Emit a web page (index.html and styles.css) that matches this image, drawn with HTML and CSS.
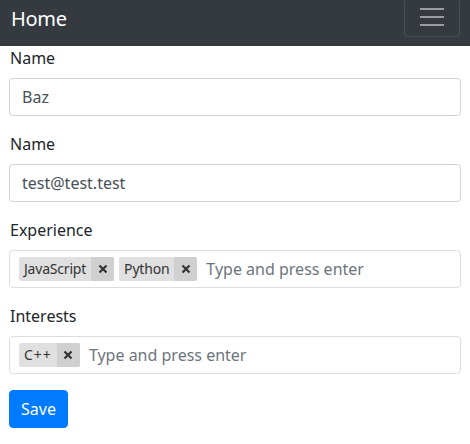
FILE: index.html
```html
<!DOCTYPE html>
<html>
<head>
<meta charset="utf-8">
<link rel="stylesheet" href="styles.css">
</head>
<body>
<nav class="navbar">
  <span class="brand">Home</span>
  <button class="toggler"><span class="bar"></span><span class="bar"></span><span class="bar"></span></button>
</nav>
<form class="form">
  <div class="group">
    <label class="label">Name</label>
    <div class="control">Baz</div>
  </div>
  <div class="group">
    <label class="label">Name</label>
    <div class="control">test@test.test</div>
  </div>
  <div class="group">
    <label class="label">Experience</label>
    <div class="control tags">
      <span class="tag"><span class="tag-text">JavaScript</span><span class="tag-x"><svg width="10" height="10" viewBox="0 0 10 10"><path d="M1.5 1.5 8.5 8.5M8.5 1.5 1.5 8.5" stroke="#333" stroke-width="2.2" stroke-linecap="butt"/></svg></span></span>
      <span class="tag"><span class="tag-text">Python</span><span class="tag-x"><svg width="10" height="10" viewBox="0 0 10 10"><path d="M1.5 1.5 8.5 8.5M8.5 1.5 1.5 8.5" stroke="#333" stroke-width="2.2" stroke-linecap="butt"/></svg></span></span>
      <span class="placeholder">Type and press enter</span>
    </div>
  </div>
  <div class="group">
    <label class="label">Interests</label>
    <div class="control tags">
      <span class="tag"><span class="tag-text wide">C++</span><span class="tag-x"><svg width="10" height="10" viewBox="0 0 10 10"><path d="M1.5 1.5 8.5 8.5M8.5 1.5 1.5 8.5" stroke="#333" stroke-width="2.2" stroke-linecap="butt"/></svg></span></span>
      <span class="placeholder">Type and press enter</span>
    </div>
  </div>
  <button type="button" class="btn">Save</button>
</form>
</body>
</html>
```
FILE: styles.css
```css
* { box-sizing: border-box; }
html, body { margin: 0; padding: 0; }
body {
  font-family: "Noto Sans", "Open Sans", sans-serif;
  font-size: 16px;
  line-height: 24px;
  color: #212529;
  background: #fff;
  width: 470px;
  height: 444px;
  overflow: hidden;
}
.navbar {
  height: 46px;
  background: #343a40;
  display: flex;
  justify-content: space-between;
  align-items: flex-start;
  padding: 0 10px 0 11px;
  overflow: hidden;
}
.brand {
  color: #fff;
  font-size: 20px;
  line-height: 30px;
  margin-top: 4px;
  letter-spacing: -0.3px;
}
.toggler {
  margin-top: -3px;
  width: 56px;
  height: 40px;
  background: transparent;
  border: 1px solid rgba(255,255,255,0.1);
  border-radius: 4px;
  display: flex;
  flex-direction: column;
  align-items: center;
  justify-content: center;
  gap: 6px;
  padding: 0;
}
.bar {
  display: block;
  width: 24px;
  height: 2px;
  background: rgba(255,255,255,0.5);
}
.form {
  padding: 0 9px;
}
.group {
  margin-bottom: 16px;
}
.label {
  display: block;
  padding-left: 1px;
  margin-bottom: 8px;
}
.control {
  height: 38px;
  border: 1px solid #ced4da;
  border-radius: 4px;
  padding: 6px 12px;
  color: #495057;
}
.tags {
  display: flex;
  align-items: center;
  gap: 5px;
  padding: 0 9px;
  border-color: #dddddd;
}
.tag {
  display: flex;
  height: 24px;
  background: #e0e0e0;
  border-radius: 2px;
  overflow: hidden;
  font-size: 14px;
  line-height: 24px;
  color: #333;
}
.tag-text { padding: 0 5px 0 5px; letter-spacing: -0.2px; }
.tag-text.wide { letter-spacing: 1px; }
.tag-x {
  width: 23px;
  display: flex;
  align-items: center;
  justify-content: center;
  background: #d0d0d0;
}
.placeholder {
  color: #6c757d;
  margin-left: 4px;
}
.btn {
  font-family: inherit;
  font-size: 16px;
  line-height: 24px;
  color: #fff;
  background: #007bff;
  border: 1px solid #007bff;
  border-radius: 4px;
  padding: 6px 11px;
  height: 38px;
}
```
